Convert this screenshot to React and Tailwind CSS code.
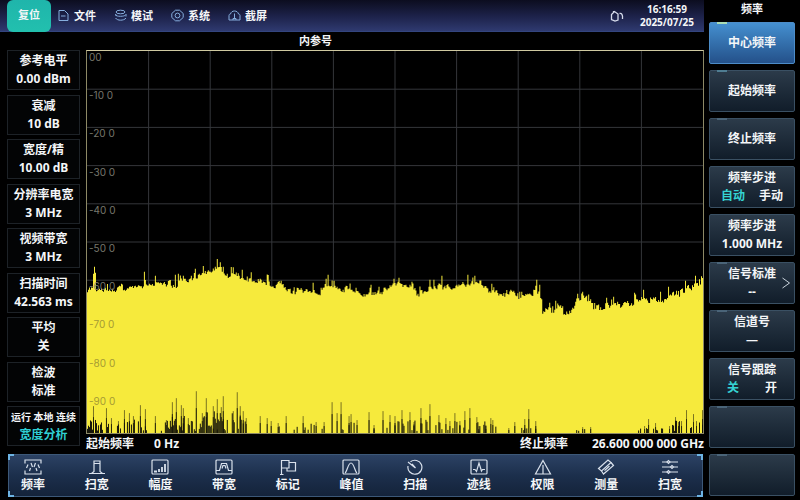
import React from "react";
import clsx from "clsx";

const menuItems = [
    { label: "文件", icon: "file" },
    { label: "模试", icon: "mode" },
    { label: "系统", icon: "system" },
    { label: "截屏", icon: "capture" },
];

const readouts = [
    { label: "参考电平", value: "0.00 dBm" },
    { label: "衰减", value: "10 dB" },
    { label: "宽度/精", value: "10.00 dB" },
    { label: "分辨率电宽", value: "3 MHz" },
    { label: "视频带宽", value: "3 MHz" },
    { label: "扫描时间", value: "42.563 ms" },
    { label: "平均", value: "关" },
    { label: "检波", value: "标准" },
    { label: "运行 本地 连续", value: "宽度分析", status: true },
];

const softKeys = [
    { label: "中心频率", active: true, tab: "bg-[#a9dcb4]" },
    { label: "起始频率", tab: "bg-[#4f7d92]" },
    { label: "终止频率", tab: "bg-[#4a6478]" },
    { label: "频率步进", options: ["自动", "手动"] },
    { label: "频率步进", value: "1.000 MHz" },
    { label: "信号标准", value: "--", arrow: true, tab: "bg-[#4a6478]" },
    { label: "信道号", value: "—", tab: "bg-[#4a6478]" },
    { label: "信号跟踪", options: ["关", "开"], wide: true },
    { label: "", tab: "bg-[#4a6478]" },
    { label: "", tab: "bg-[#4a6478]" },
];

const tools = [
    { label: "频率", icon: "freq" },
    { label: "扫宽", icon: "span" },
    { label: "幅度", icon: "amp" },
    { label: "带宽", icon: "bw" },
    { label: "标记", icon: "marker" },
    { label: "峰值", icon: "peak" },
    { label: "扫描", icon: "sweep" },
    { label: "迹线", icon: "trace" },
    { label: "权限", icon: "limit" },
    { label: "测量", icon: "measure" },
    { label: "扫宽", icon: "sliders" },
];

const levels = ["00", "-10 0", "-20 0", "-30 0", "-40 0", "-50 0", "-60 0", "-70 0", "-80 0", "-90 0"];

const PLOT_W = 617;
const PLOT_H = 384;

// noise floor outline, [x, y] in plot units
const floor = [
    [0, 241], [5, 236], [7, 222], [8, 236], [9, 243], [21, 242], [37, 239], [52, 236], [62, 240], [74, 236],
    [91, 236], [107, 231], [121, 226], [131, 219], [137, 225], [151, 226], [161, 232], [177, 233], [187, 238],
    [194, 234], [201, 243], [227, 244], [234, 247], [239, 237], [247, 239], [261, 241], [271, 245], [294, 245],
    [304, 240], [312, 234], [321, 240], [334, 245], [344, 240], [371, 238], [391, 233], [397, 241], [414, 245],
    [418, 250], [424, 246], [437, 249], [447, 244], [453, 242], [454, 250], [456, 263], [471, 260], [484, 265],
    [487, 259], [491, 249], [502, 249], [507, 259], [537, 258], [554, 252], [571, 252], [587, 248], [597, 243],
    [607, 238], [617, 230],
];

// single peaks that stand out of the floor, x -> y
const peaks = {
    6: 224, 7: 217, 8: 223, 57: 222, 68: 226, 88: 225, 91: 224, 96: 226, 108: 219, 116: 216, 130: 209, 136: 217,
    155: 220, 173: 229, 194: 231, 226: 233, 239: 229, 241: 225, 247: 231, 284: 235, 292: 237,
    312: 228, 325: 232, 343: 230, 347: 230, 355: 226, 381: 225, 388: 226, 424: 240, 433: 242,
    449: 236, 450: 230, 463: 253, 469: 251, 496: 242, 520: 248, 527: 247, 531: 252, 548: 243,
    557: 240, 574: 242, 582: 237, 599: 231, 609: 226,
};

// dropouts along the bottom edge, [x, height]
const drops = [
    [6, 27], [19, 25], [24, 15], [31, 12], [37, 23], [42, 20], [46, 17], [53, 28], [58, 24], [68, 17], [79, 13],
    [85, 31], [89, 35], [94, 28], [96, 25], [101, 15], [109, 42], [115, 20], [119, 35], [126, 27], [130, 34],
    [134, 26], [136, 37], [146, 22], [150, 41], [153, 27], [156, 22], [159, 15], [173, 17], [180, 15], [184, 12],
    [191, 10], [199, 17], [216, 17], [229, 11], [237, 11], [245, 31], [250, 20], [254, 31], [262, 17], [264, 19],
    [270, 13], [282, 21], [287, 8], [296, 22], [303, 18], [308, 17], [315, 23], [323, 21], [327, 11], [334, 25],
    [343, 29], [352, 18], [359, 15], [363, 12], [368, 20], [373, 12], [378, 22], [383, 25], [390, 16], [392, 7],
    [399, 7], [404, 15], [406, 13], [422, 5], [428, 11], [438, 14], [442, 24], [449, 12], [496, 6], [504, 6],
    [552, 3], [558, 7], [562, 14], [569, 10], [583, 7], [589, 16], [592, 11], [595, 12], [600, 23], [607, 19],
    [610, 12], [616, 23],
];

// [from, to, chance, max height] of the short black bars
const clusters = [
    [0, 16, 0.7, 14], [17, 80, 0.25, 14], [80, 100, 0.75, 18], [100, 114, 0.35, 14], [114, 134, 0.9, 26],
    [134, 160, 0.5, 20], [160, 240, 0.12, 10], [240, 320, 0.18, 12], [320, 410, 0.25, 14], [422, 450, 0.2, 6],
    [490, 500, 0.3, 4], [552, 580, 0.3, 5], [583, 617, 0.35, 13],
];

const makeRandom = (seed) => () => {
    seed = (seed * 1664525 + 1013904223) % 4294967296;
    return seed / 4294967296;
};

const floorAt = (x) => {
    const i = Math.max(1, floor.findIndex((p) => p[0] >= x));
    const [x0, y0] = floor[i - 1];
    const [x1, y1] = floor[i];
    return y0 + ((y1 - y0) * (x - x0)) / (x1 - x0);
};

const buildTrace = () => {
    const random = makeRandom(7);
    let d = `M0 ${PLOT_H}`;
    let drift = 0;
    for (let x = 0; x < PLOT_W; x++) {
        const r = random();
        if (x % 3 === 0) drift = random() * 6 - 4;
        let y = floorAt(x) + 1 + drift - r * 4;
        if (r > 0.93) y -= 3;
        if (peaks[x]) y = peaks[x];
        d += `V${y.toFixed(1)}H${x + 1}`;
    }
    return `${d}V${PLOT_H}Z`;
};

const buildBars = () => {
    const random = makeRandom(21);
    let d = "";
    clusters.forEach(([from, to, chance, max]) => {
        for (let x = from; x < to; x++) {
            if (random() < chance) d += `M${x + 0.5} ${PLOT_H}v-${(2 + random() * (max - 2)).toFixed(1)}`;
        }
    });
    return d;
};

const tracePath = buildTrace();
const barsPath = buildBars();
const dropsPath = drops.map(([x, h]) => `M${x + 0.5} ${PLOT_H}v-${h}`).join("");
const dropRoots = drops.map(([x, h]) => `M${x + 0.5} ${PLOT_H}v-${Math.round(h * 0.6)}`).join("");
const gridPath = [1, 2, 3, 4, 5, 6, 7, 8, 9]
    .map((n) => `M${n * 61.7} 0V${PLOT_H}M0 ${n * 38.4}H${PLOT_W}`)
    .join("");

const menuIcons = {
    file: (
        <>
            <path d="M2 1.5h5.5l3.5 3.5v6.5H2z" />
            <path d="M4 7h4.500" />
        </>
    ),
    mode: (
        <>
            <ellipse cx="6.5" cy="3" rx="4.5" ry="1.8" />
            <path d="M1 5.500c1 1.500 3 1.800 5.500 1.800s4.500-.5 5-1.300M1.500 9c1 1.500 3 2.200 5 2.200s4.500-.6 5.500-2.200M12 5v2.500M1 5.500l2 1" />
        </>
    ),
    system: (
        <>
            <path d="M4.500 1.200h4l3.700 3.300v4L8.500 11.800h-4L.8 8.500v-4z" />
            <circle cx="6.5" cy="6.5" r="2.4" />
        </>
    ),
    capture: (
        <>
            <path d="M1 11V6.500c0-1 .7-1.500 1.500-1.500C3 3 4.500 2 6.500 2s3.500 1 4 3c.8 0 1.500.5 1.500 1.500V11z" />
            <path d="M6.500 4.500V9M5 11V9.500h3V11" />
        </>
    ),
};

const toolIcons = {
    freq: (
        <>
            <path d="M1 4.500V1h16v3.500M1 11.500V15h16v-3.500" />
            <path d="M4 5.500L2.500 9M7 4l1.500 4M11.500 4L10 8M14 5.500L15.500 9M6.500 9L5.500 12M12 9l1 3" />
        </>
    ),
    span: <path d="M1 14.500h16M3.500 14.500L6 12.500V2h6v10.500l2.500 2M6 4.500h6" />,
    amp: (
        <>
            <rect x="1" y="1" width="16" height="14" rx="1" />
            <path d="M3 12.500h3M8 13v-3M11 13V8M14 13V5" strokeWidth="1.8" />
        </>
    ),
    bw: (
        <>
            <rect x="1" y="1" width="16" height="14" rx="1" />
            <path d="M1 11.500h3.500L6.500 4.500h5l2 7H17M7 9.500l1-3h2l1 3" />
        </>
    ),
    marker: <path d="M2.500 15.500V1.500h7.500v7.500H2.500M10 3.500h6.500v8.500H8V9M1 15.500h3.500" />,
    peak: (
        <>
            <rect x="1" y="1" width="16" height="14" rx="1" />
            <path d="M3 14C5 13 6 4 9 4s4 9 6 10" />
        </>
    ),
    sweep: <path d="M4.500 2.800A7 7 0 1 1 2 7M2 3l7.500 6M6 4.800l3.500 4.200" />,
    trace: (
        <>
            <rect x="1" y="1" width="16" height="14" rx="1" />
            <path d="M3 10.500h2l1.500 2L9 4l2.500 8 1-1.500H15" />
        </>
    ),
    limit: <path d="M9 1.500L16.500 15h-15zM9 6v8.500" />,
    measure: (
        <>
            <path d="M1.500 9.500L11 1l3 2.500-9.500 8.500z" />
            <path d="M4.500 12l2 3L16.500 6.500 14 3.500M7.500 11.500l5-4.500" />
        </>
    ),
    sliders: (
        <>
            <path d="M1 3h5M9 3h8M1 8h8.500M12.500 8H17M1 13h5M9 13h8" />
            <path d="M6 3l1.500-1.500L9 3 7.500 4.500zM9.500 8L11 6.500 12.500 8 11 9.500zM6 13l1.500-1.500L9 13l-1.500 1.500z" />
        </>
    ),
};

const Header = () => (
    <header className="flex h-8 items-center border-b border-[#33457f] bg-linear-to-b from-[#0c0d1f] via-[#1c2148] to-[#2f3a70] pl-[7px] pr-2.5">
        <button className="h-8 w-11 shrink-0 rounded-md bg-linear-to-b from-[#1fb5ab] to-[#22c0ae] text-[11px]">复位</button>
        <nav className="ml-1.5 flex gap-[18px]">
            {menuItems.map((item) => (
                <button key={item.label} className="flex items-center gap-1 text-[11px] leading-4">
                    <svg viewBox="0 0 13 13" className="size-[13px] fill-none stroke-[#86aede]" aria-hidden="true">
                        {menuIcons[item.icon]}
                    </svg>
                    {item.label}
                </button>
            ))}
        </nav>
        <svg viewBox="0 0 14 12" className="ml-auto mr-4 h-3 w-3.5 fill-none stroke-[#d5daea] stroke-[1.3]" aria-hidden="true">
            <path d="M1.500 9.500V4.500L4.500 1.500 8 4v6l-3 1zM1.500 9.500L5 11M3.500 2.500V1" />
            <path d="M9.500 3.500c2-.5 3.500 1 3 5.500" />
        </svg>
        <div className="text-center text-[10px] leading-[13px]">
            <div>16:16:59</div>
            <div>2025/07/25</div>
        </div>
    </header>
);

const Readout = ({ item }) => (
    <div className="flex h-10 flex-col items-center justify-center whitespace-nowrap border border-[#1d2227] bg-[#030405]">
        <dt className={clsx("leading-[18px]", item.status ? "text-[10px]" : "text-[12px]")}>{item.label}</dt>
        <dd className={clsx("text-[12px] leading-[18px]", item.status && "text-[#2fd0d4]")}>{item.value}</dd>
    </div>
);

const Spectrum = () => (
    <section className="flex min-w-0 flex-1 flex-col">
        <h1 className="h-[18px] self-start pl-[213px] text-[11px] leading-[18px]">内参号</h1>
        <div className="relative flex min-h-0 flex-1 border border-[#8d8966] border-t-[#cfc9a0] bg-black">
            <svg viewBox={`0 0 ${PLOT_W} ${PLOT_H}`} preserveAspectRatio="none" className="h-full w-full" role="img" aria-label="内参号">
                <path d={gridPath} className="fill-none stroke-[#34363a]" />
                <path d={tracePath} className="fill-[#f6ea3c]" />
                <path d={dropsPath} className="fill-none stroke-[#7a7320]" />
                <path d={dropRoots} className="fill-none stroke-[#2a280a]" />
                <path d={barsPath} className="fill-none stroke-[#15140a]" />
            </svg>
            <ul className="absolute inset-0 grid grid-rows-10 pl-0.5 font-['Inter'] text-[10px] font-normal leading-3 text-[#77776c]">
                {levels.map((level, i) => (
                    <li key={level} className={i > 6 ? "text-[#a59a34]" : undefined}>{level}</li>
                ))}
            </ul>
        </div>
        <div className="flex h-5 items-center text-[12px] leading-5">
            <span>起始频率</span>
            <span className="ml-5">0 Hz</span>
            <span className="ml-auto">终止频率</span>
            <span className="ml-6">26.600 000 000 GHz</span>
        </div>
    </section>
);

const Toolbar = () => (
    <nav className="relative ml-2 mr-px flex h-[43px] items-center justify-between border border-[#3c5878] bg-linear-to-b from-[#2c4264] via-[#1c2f4c] to-[#14233a] pl-3 pr-5">
        <span className="absolute -left-px -top-px size-1.5 border-l-2 border-t-2 border-[#6db4e4]" />
        <span className="absolute -right-px -top-px size-1.5 border-r-2 border-t-2 border-[#6db4e4]" />
        <span className="absolute -bottom-px -left-px size-1.5 border-b-2 border-l-2 border-[#6db4e4]" />
        <span className="absolute -bottom-px -right-px size-1.5 border-b-2 border-r-2 border-[#6db4e4]" />
        {tools.map((tool) => (
            <button key={tool.icon} className="flex flex-col items-center gap-0.5 text-[12px] leading-4">
                <svg viewBox="0 0 18 16" className="h-4 w-[18px] fill-none stroke-[#d9e1ec] stroke-[1.2]" aria-hidden="true">
                    {toolIcons[tool.icon]}
                </svg>
                {tool.label}
            </button>
        ))}
    </nav>
);

const SoftKey = ({ item }) => (
    <button
        className={clsx(
            "relative flex flex-col items-center justify-center rounded-xs border text-[12px] leading-[18px]",
            item.active
                ? "border-[#4c8cc8] bg-linear-to-b from-[#4590d0] to-[#24518a]"
                : "border-[#3a5063] bg-linear-to-b from-[#2c3b4a] to-[#111d2a]"
        )}
    >
        {item.tab && <span className={clsx("absolute -top-px left-[7px] h-0.5 w-2.5", item.tab)} />}
        <span>{item.label}</span>
        {item.value && <span>{item.value}</span>}
        {item.options && (
            <span className={clsx("flex", item.wide ? "gap-[26px]" : "gap-3.5")}>
                <span className="text-[#35d3d3]">{item.options[0]}</span>
                <span>{item.options[1]}</span>
            </span>
        )}
        {item.arrow && (
            <svg viewBox="0 0 8 12" className="absolute right-1 top-3.5 h-3 w-2 fill-none stroke-[#c9d3dc]" aria-hidden="true">
                <path d="M.5 1l7 5-7 5" />
            </svg>
        )}
    </button>
);

const App = () => {
    return (
        <div className="flex h-screen min-h-[500px] bg-black font-['Noto_Sans','Noto_Sans_CJK_SC',sans-serif] font-bold text-[#f4f6f8]">
            <main className="flex min-w-0 flex-1 flex-col pb-[3px]">
                <Header />
                <div className="flex min-h-0 flex-1 gap-1.5">
                    <dl className="ml-[7px] flex w-[73px] shrink-0 flex-col justify-between pb-2 pt-[18px]">
                        {readouts.map((item) => (
                            <Readout key={item.label} item={item} />
                        ))}
                    </dl>
                    <Spectrum />
                </div>
                <Toolbar />
            </main>
            <aside className="flex w-24 shrink-0 flex-col pb-1 pl-[5px] pr-[5px]">
                <h2 className="h-[22px] text-center text-[11px] leading-[18px]">频率</h2>
                <div className="grid flex-1 auto-rows-fr gap-1.5">
                    {softKeys.map((item, i) => (
                        <SoftKey key={i} item={item} />
                    ))}
                </div>
            </aside>
        </div>
    );
};

export default App;
